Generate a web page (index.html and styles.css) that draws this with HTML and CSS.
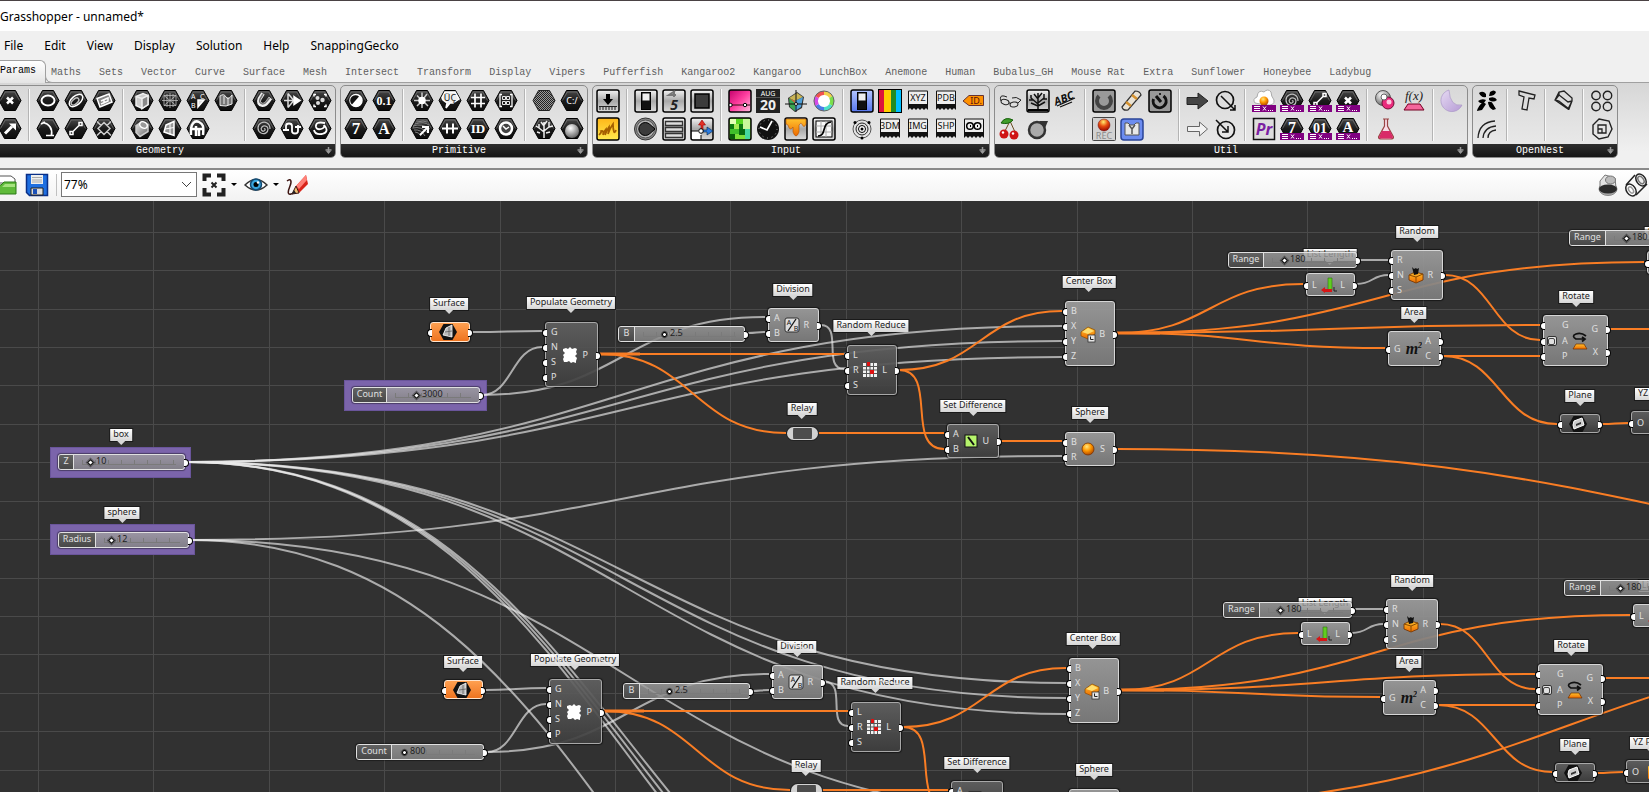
FILE: index.html
```html
<!DOCTYPE html>
<html lang="en">
<head>
<meta charset="utf-8">
<title>Grasshopper - unnamed*</title>
<link rel="stylesheet" href="styles.css">
</head>
<body>
<svg class="defs" aria-hidden="true">
  <defs>
    <linearGradient id="g-hex" x1="0" y1="0" x2="0" y2="1"><stop offset="0" stop-color="#4a4a4a"/><stop offset=".5" stop-color="#1c1c1c"/><stop offset="1" stop-color="#0c0c0c"/></linearGradient>
    <linearGradient id="g-box" x1="0" y1="0" x2="0" y2="1"><stop offset="0" stop-color="#f4f4f4"/><stop offset=".5" stop-color="#a8a8a8"/><stop offset="1" stop-color="#dcdcdc"/></linearGradient>
    <linearGradient id="g-grey" x1="0" y1="0" x2="1" y2="1"><stop offset="0" stop-color="#eee"/><stop offset="1" stop-color="#666"/></linearGradient>
    <linearGradient id="g-blue" x1="0" y1="0" x2="0" y2="1"><stop offset="0" stop-color="#b4c6ff"/><stop offset="1" stop-color="#5676ee"/></linearGradient>
    <linearGradient id="g-yellow" x1="0" y1="0" x2="0" y2="1"><stop offset="0" stop-color="#ffb619"/><stop offset="1" stop-color="#ffe94e"/></linearGradient>
    <linearGradient id="g-pink" x1="0" y1="0" x2="1" y2="1"><stop offset="0" stop-color="#c3006b"/><stop offset=".5" stop-color="#ff3fa0"/><stop offset="1" stop-color="#ffc0de"/></linearGradient>
    <linearGradient id="g-orange" x1="0" y1="0" x2="0" y2="1"><stop offset="0" stop-color="#ffc22e"/><stop offset="1" stop-color="#ee6a00"/></linearGradient>
    <linearGradient id="g-moon" x1="0" y1="0" x2="1" y2="1"><stop offset="0" stop-color="#e6daf3"/><stop offset="1" stop-color="#b59bd4"/></linearGradient>
    <radialGradient id="g-ball" cx=".4" cy=".3" r=".7"><stop offset="0" stop-color="#fff"/><stop offset="1" stop-color="#666"/></radialGradient>
    <radialGradient id="g-sun" cx=".4" cy=".3" r=".7"><stop offset="0" stop-color="#ffe680"/><stop offset=".5" stop-color="#f90"/><stop offset="1" stop-color="#b34a00"/></radialGradient>
    <radialGradient id="g-rec" cx=".45" cy=".25" r=".8"><stop offset="0" stop-color="#ffee70"/><stop offset=".45" stop-color="#e84d10"/><stop offset="1" stop-color="#8a0000"/></radialGradient>
    <pattern id="p-check" width="2" height="2" patternUnits="userSpaceOnUse"><rect width="2" height="2" fill="#222"/><path d="M0 0h1v1H0zM1 1h1v1H1z" fill="#999"/></pattern>
  </defs>
</svg>

<header class="titlebar"><h1 class="title">Grasshopper - unnamed*</h1></header>

<nav class="menu" aria-label="Main menu">
  <button>File</button><button>Edit</button><button>View</button><button>Display</button><button>Solution</button><button>Help</button><button>SnappingGecko</button>
</nav>

<div class="tabs" role="tablist">
  <button role="tab" class="tab tab-active" aria-selected="true">Params</button>
  <button role="tab" class="tab">Maths</button>
  <button role="tab" class="tab">Sets</button>
  <button role="tab" class="tab">Vector</button>
  <button role="tab" class="tab">Curve</button>
  <button role="tab" class="tab">Surface</button>
  <button role="tab" class="tab">Mesh</button>
  <button role="tab" class="tab">Intersect</button>
  <button role="tab" class="tab">Transform</button>
  <button role="tab" class="tab">Display</button>
  <button role="tab" class="tab">Vipers</button>
  <button role="tab" class="tab">Pufferfish</button>
  <button role="tab" class="tab">Kangaroo2</button>
  <button role="tab" class="tab">Kangaroo</button>
  <button role="tab" class="tab">LunchBox</button>
  <button role="tab" class="tab">Anemone</button>
  <button role="tab" class="tab">Human</button>
  <button role="tab" class="tab">Bubalus_GH</button>
  <button role="tab" class="tab">Mouse Rat</button>
  <button role="tab" class="tab">Extra</button>
  <button role="tab" class="tab">Sunflower</button>
  <button role="tab" class="tab">Honeybee</button>
  <button role="tab" class="tab">Ladybug</button>
</div>

<section class="ribbon" id="ribbon"></section>

<div class="toolbar">
  <button class="tb" aria-label="Open"><svg viewBox="0 0 24 24"><path d="M1 3h17l4 3v4H1z" fill="#fff" stroke="#555"/><path d="M0 21V12h8l3-3h12v12z" fill="#5fba3a" stroke="#2c7a18"/><path d="M0 14h9l3-3h10v3z" fill="#a6e27f"/></svg></button>
  <button class="tb" aria-label="Save"><svg viewBox="0 0 24 24"><path d="M1.500 1.500h21v21h-18l-3-3z" fill="#1f6fe0" stroke="#0a2f86" stroke-width="1.500"/><path d="M6 2h12v9H6z" fill="#eee"/><path d="M7 4.500h10M7 7h10M7 9h10" stroke="#aaa"/><path d="M6 15h12v7H6z" fill="#ddd" stroke="#222"/><path d="M8 16h4v5H8z" fill="#1c51b8"/></svg></button>
  <span class="tb-sep"></span>
  <select class="zoom" aria-label="Zoom"><option>77%</option></select>
  <button class="tb" aria-label="Zoom extents"><svg viewBox="0 0 24 24"><path d="M2.500 8V2.500H9M15 2.500h6.500V8M21.500 15v6.500H15M9 21.500H2.500V15" fill="none" stroke="#222" stroke-width="4"/><path d="M9.500 9.500l5 5M14.500 9.500l-5 5" stroke="#222" stroke-width="2"/></svg></button>
  <span class="caret"></span>
  <button class="tb" aria-label="Preview"><svg viewBox="0 0 24 24"><path d="M1 12Q12 1 23 12Q12 22 1 12z" fill="#fff" stroke="#333" stroke-width="1.500"/><circle cx="12" cy="11.500" r="5.500" fill="#38a5dc" stroke="#124a73" stroke-width="1.500"/><circle cx="12" cy="11.500" r="2.500"/><circle cx="14" cy="9.500" r="1.200" fill="#fff"/></svg></button>
  <span class="caret"></span>
  <button class="tb" aria-label="Sketch"><svg viewBox="0 0 24 24"><path d="M1 8c4-3 5 0 3 5s-3 9 1 8 5-2 5-2" fill="none" stroke="#3d1512" stroke-width="1.500"/><path d="M10 13L20 2l2 9-9 9z" fill="#d8241a"/><path d="M10 13L20 2l1 5-8 9z" fill="#ff8178"/><path d="M6 21l4-8 3 7z" fill="#f0bd72" stroke="#3d1512"/><path d="M6 21l2-4 2 3z" fill="#222"/></svg></button>
  <span class="spacer"></span>
  <button class="tb" aria-label="Shaded preview"><svg viewBox="0 0 24 24"><ellipse cx="12" cy="16" rx="9" ry="6.500" fill="#aaa" stroke="#888"/><path d="M4 15V8l5-6 10 3 1 10z" fill="#e2e2e2" stroke="#777"/><ellipse cx="14.500" cy="7" rx="5" ry="4" fill="#bbb" stroke="#777"/><ellipse cx="12" cy="16" rx="9" ry="4.500" fill="#2b2b2b"/></svg></button>
  <button class="tb" aria-label="Wire preview"><svg viewBox="0 0 24 24" fill="none" stroke="#222" stroke-width="1.500"><path d="M2 12L11 2M12 22l11-11"/><ellipse cx="7" cy="17" rx="4.500" ry="6.500" transform="rotate(-35 7 17)" fill="#fff"/><ellipse cx="7" cy="17" rx="2" ry="3.500" transform="rotate(-35 7 17)" stroke="#999"/><ellipse cx="17" cy="7" rx="4.500" ry="6.500" transform="rotate(-35 17 7)" fill="#eee"/><ellipse cx="17" cy="7" rx="2.500" ry="4" transform="rotate(-35 17 7)" stroke="#777"/></svg></button>
</div>

<main class="canvas" id="canvas"></main>
<script src="app.js"></script>
</body>
</html>
```
FILE: styles.css
```css
* { box-sizing: border-box; }
body {
  margin: 0;
  height: 100vh;
  display: flex;
  flex-direction: column;
  overflow: hidden;
  background: #f0f0f0;
  color: #000;
  font-family: "Noto Sans", "Open Sans", sans-serif;
  font-size: 12px;
}
button { border: 0; padding: 0; margin: 0; background: none; font: inherit; color: inherit; }
.defs { position: absolute; width: 0; height: 0; }

.titlebar { height: 31px; flex: none; background: #fff; border-top: 1px solid #4a4244; display: flex; align-items: center; }
.title { margin: 0; font-size: 12px; font-weight: 400; }

.menu { height: 29px; flex: none; display: flex; align-items: center; gap: 21px; padding-left: 4px; font-size: 12px; }

.tabs {
  height: 23px; flex: none; display: flex; gap: 18px;
  border-bottom: 1px solid #a0a0a0;
  font-family: "Liberation Mono", monospace; font-size: 10px; color: #606060;
}
.tab { height: 22px; padding-top: 2px; white-space: nowrap; }
.tab-active {
  position: relative; height: 23px; width: 46px; margin-right: -13px;
  text-align: left; color: #000; padding: 0 0 3px;
  border: 1px solid #a0a0a0; border-width: 1px 1px 0 0; border-top-right-radius: 6px;
  background: linear-gradient(#fff, #e4e4e4);
}
.tab-active::after {
  content: ""; position: absolute; left: 100%; bottom: 0; width: 7px; height: 7px;
  border: 1px solid #a0a0a0; border-width: 0 0 1px 1px; border-bottom-left-radius: 7px; background: #f0f0f0;
}

.ribbon { height: 85px; flex: none; display: flex; align-items: flex-start; gap: 4px; padding-top: 2px; background: linear-gradient(#d6d6d6, #f0f0f0 80%); }
.panel { flex: none; border: 1px solid #8c8c8c; border-radius: 5px; overflow: hidden; background: linear-gradient(#d8d8d8, #ececec); }
.panel:first-child { margin-left: -6px; }
.panel-body { display: flex; gap: 6px; padding: 3px 3px 3px; }
.tools { display: grid; grid-template-rows: 24px 24px; grid-auto-columns: 24px; grid-auto-flow: column; gap: 4px; }
.rule { width: 2px; background: linear-gradient(90deg, #b4b4b4 50%, #fafafa 50%); }
.tool { width: 24px; height: 24px; }
.tool svg { display: block; width: 24px; height: 24px; }
.tool text { font-family: "Noto Sans", sans-serif; }
.tool .serif { font-family: "Liberation Serif", serif; }
.panel-foot {
  height: 13px; display: flex; align-items: center; justify-content: center; padding-right: 10px;
  background: linear-gradient(#2e2e2e, #161616); color: #fff;
  font-family: "Liberation Mono", monospace; font-size: 10px; line-height: 12px; position: relative;
}
.panel-foot button { position: absolute; right: 2px; top: 2px; width: 9px; height: 9px; }
.panel-foot svg { display: block; width: 9px; height: 9px; }

.toolbar {
  height: 33px; flex: none; display: flex; align-items: center; padding: 0 1px 2px 0;
  border-top: 2px solid #8a8a8a; background: linear-gradient(#fff, #f2f2f2);
}
.tb { width: 24px; height: 24px; flex: none; }
.tb:first-child { margin-left: -7px; }
.tb + .tb { margin-left: 8px; }
.spacer + .tb + .tb { margin-left: 4px; }
.tb svg { display: block; width: 24px; height: 24px; }
.tb-sep { width: 1px; height: 22px; margin: 0 4px 0 7px; background: #c0c0c0; }
.zoom {
  width: 136px; height: 25px; margin-right: 5px; padding: 0 2px; appearance: none;
  border: 1px solid #777; border-radius: 0; color: #000; font: inherit; font-size: 12px; line-height: 20px;
  background-color: #fff;
  background-image: linear-gradient(45deg, transparent 44%, #444 44% 58%, transparent 58%), linear-gradient(-45deg, transparent 44%, #444 44% 58%, transparent 58%);
  background-size: 5px 5px; background-repeat: no-repeat; background-position: right 9px center, right 5px center;
}
.caret { margin: 0 7px 0 5px; border: 3px solid transparent; border-top-color: #000; border-bottom: 0; }
.spacer { flex: 1; }

.canvas { position: relative; flex: 1; min-height: 0; overflow: hidden; background: #313131; font-size: 9px; line-height: 12px; }
.layer { position: absolute; inset: 0; width: 100%; height: 100%; }
.grid-line { stroke: #4a4a4a; shape-rendering: crispEdges; }
.wire { fill: none; stroke: rgba(235, 235, 235, .66); stroke-width: 2; }
.wire-hot { stroke: #f97d24; }
.wire-thick { stroke-width: 3; }

.cluster { position: absolute; background: #7b64ab; border: 1px solid #6a559b; }
.tag {
  position: absolute; transform: translateX(-50%); height: 12px; padding: 0 3px; white-space: nowrap; line-height: 10px;
  background: linear-gradient(#fff, #d6d6d6); color: #222; box-shadow: 0 0 0 1px #1a1a1a;
}
.tag::after { content: ""; position: absolute; left: 50%; top: 100%; margin-left: -4px; border: 4px solid transparent; border-top-color: #d8d8d8; border-bottom: 0; }

.node {
  position: absolute; display: flex; align-items: stretch; justify-content: space-between;
  border: 1px solid #d6d6d6; border-radius: 3px; color: #e0e0e0;
  background: linear-gradient(rgba(156, 156, 156, .93), rgba(124, 124, 124, .93)); box-shadow: 0 0 1px 1px rgba(0, 0, 0, .5);
}
.node-dark { border-color: #a8a8a8; background: linear-gradient(rgba(96, 96, 96, .92), rgba(62, 62, 62, .92)); }
.node-hot { border-color: #ffe4cc; background: linear-gradient(#ffa050, #ee7420); }
.ports { list-style: none; margin: 0; padding: 1px 0; display: flex; flex-direction: column; min-width: 4px; line-height: 10px; }
.ports li { flex: 1; display: flex; align-items: center; position: relative; }
.ports-in li { padding-left: 5px; }
.ports-out li { padding-right: 9px; justify-content: flex-end; }
.ports li::before { content: ""; position: absolute; top: 50%; margin-top: -3px; width: 4px; height: 6px; background: #fff; border: 1px solid #000; }
.ports-in li::before { left: -4px; border-right: 0; border-radius: 4px 0 0 4px; }
.ports-out li::before { right: -4px; border-left: 0; border-radius: 0 4px 4px 0; }
.node-wide .ports-in li { padding-left: 18px; }
.expr { position: absolute; left: 3px; top: 20px; width: 10px; height: 10px; background: #e0e0e0; border: 1px solid #333; border-radius: 2px; }
.expr::after { content: ""; position: absolute; right: 1px; top: 1px; width: 5px; height: 5px; border: 1px solid #444; border-radius: 2px; }
.glyph { width: 18px; height: 18px; flex: none; align-self: center; display: block; }
.glyph text { font-family: "Liberation Serif", serif; }
.glyph .sans { font-family: "Noto Sans", sans-serif; }

.relay { position: absolute; border: 5px solid #d2d2d2; border-width: 1px 6px; border-radius: 7px; background: #4c4c4c; box-shadow: 0 0 0 1px #222; }

.slider { position: absolute; display: flex; border: 1px solid #e0e0e0; border-radius: 3px; background: linear-gradient(rgba(160, 160, 160, .8), rgba(132, 132, 132, .86)); box-shadow: 0 0 1px 1px rgba(0, 0, 0, .4); }
.slider::after { content: ""; position: absolute; right: -5px; top: 4px; width: 4px; height: 6px; background: #fff; border: 1px solid #000; border-left: 0; border-radius: 0 4px 4px 0; }
.slider label { display: flex; align-items: flex-start; justify-content: center; border-right: 1px solid #e0e0e0; color: #e0e0e0; background: linear-gradient(#626262, #484848); border-radius: 2px 0 0 2px; }
.track { flex: 1; min-width: 0; display: grid; align-items: center; padding: 0 5px; }
.track > * { grid-area: 1 / 1; }
.track input {
  appearance: none; width: 100%; height: 5px; margin: 0;
  background: repeating-linear-gradient(90deg, #7a7a7a 0 1px, transparent 1px 13px) 3px 0 / calc(100% - 6px) 4px no-repeat, linear-gradient(#7a7a7a, #7a7a7a) 3px 4px / calc(100% - 6px) 1px no-repeat;
}
.track input::-webkit-slider-thumb { appearance: none; width: 5px; height: 5px; background: #fff; border: 1px solid #000; transform: rotate(45deg); box-shadow: 0 0 0 1px rgba(0, 0, 0, .4); }
.track .round::-webkit-slider-thumb { border-radius: 50%; }
.track output { align-self: start; color: #222; pointer-events: none; }
```
FILE: app.js
```js
// ---- Ribbon icons -------------------------------------------------------
const HEX = 'M1 11.500L6.500 1.500h11L23 11.500 17.500 21.500h-11z';
const hex = s => `<path d="${HEX}" fill="url(#g-hex)" stroke="#000"/><path d="M2.500 11.500L7.300 3h9.400l4.800 8.500" fill="none" stroke="#777" stroke-width=".7"/><g fill="none" stroke="#fff" stroke-width="1.500">${s}</g>`;
const box = (s, fill = 'url(#g-box)') => `<rect x="1" y="1" width="22" height="22" rx="2" fill="${fill}" stroke="#000" stroke-width="1.500"/>${s}`;
const chip = t => `<path d="M2 2.500q0-1 1-1h18q1 0 1 1V21l-2-2-2 2-2-2-2 2-2-2-2 2-2-2-2 2-2-2-2 2z" fill="#111"/><path d="M3 2.500h18V15H3z" fill="#eee"/><text x="12" y="12" font-size="9" text-anchor="middle" fill="#111">${t}</text>`;
const txt = (t, size = 14, y = 16) => `<text class="serif" x="12" y="${y}" font-size="${size}" font-weight="bold" text-anchor="middle" fill="#fff" stroke="none">${t}</text>`;
const bar = s => hex(s) + '<rect y="16" width="24" height="7" fill="#800080"/><path d="M2 17.500h6M2 19.500h6M2 21.500h6M11 17.500l3 4M14 17.500l-3 4M16 21.500h1M18 21.500h1M20 21.500h1" stroke="#fff" fill="none"/>';
const spiral = '<path d="M12 12c1-1 2 1 0 2s-4-2-2-4 6-1 6 2-3 6-7 4-4-8 0-10 9 0 9 6" stroke="#bbb" stroke-width="1.300"/>';
const line = '<path d="M8 15.500l8-8M6 14.500h3v3H6zM15 5.500h3v3h-3z"/>';
const cross = '<path d="M9 8.500l6 6M15 8.500l-6 6" stroke-width="2.500"/>';
const knob = '<circle cx="11.500" cy="12" r="11" fill="#888" stroke="#333"/><circle cx="11.500" cy="12" r="9" fill="#b4b4b4" stroke="#555"/><path d="M16 7.500a6.500 6.500 0 1 0 0 9l5-4.500z" fill="#3c3c3c" stroke="#000"/>';

const icons = {
  Point: hex(cross),
  Vector: hex('<path d="M7 16.500l7-7" stroke-width="3"/><path d="M11 6.500h7v7z" fill="#fff" stroke="none"/>'),
  Circle: hex('<ellipse cx="12" cy="11.500" rx="6.500" ry="5" stroke-width="2"/>'),
  'Circular Arc': hex('<path d="M7 5.500Q17 8 15.500 18M10 18.500h8M5 7l4-2" stroke-width="1.700"/>'),
  Curve: hex('<ellipse cx="12" cy="11.500" rx="8" ry="4.500" transform="rotate(-40 12 11.500)"/><ellipse cx="11" cy="12.500" rx="4.500" ry="2.500" transform="rotate(-40 11 12.500)" stroke="#bbb"/>'),
  Line: hex(line),
  Plane: hex('<path d="M5 9.500L17 5l3 8-12 5z" fill="#888"/><path d="M9 12l7-3v3l-7 3M12 10.500v4"/>'),
  Rectangle: hex('<path d="M12 5.500l6 6-6 6-6-6zM5 4.500l4 4M19 4.500l-4 4M5 18.500l4-4M19 18.500l-4-4" stroke="#ccc"/>'),
  Box: hex('<path d="M6 7.500l7-3 5 2v9l-6 4-6-3z" fill="#ccc" stroke="#eee"/><path d="M12 9.500v10l6-4v-9z" fill="#888" stroke="#eee"/><path d="M6 7.500l6 2" stroke="#eee"/>'),
  Brep: hex('<path d="M6 8.500l6-4 6 3v7l-8 5-4-4z" fill="url(#g-grey)" stroke="#ccc"/><ellipse cx="13.500" cy="8" rx="4" ry="3" transform="rotate(30 13.500 8)" fill="#999" stroke="#fff"/>'),
  Mesh: hex('<path d="M6 6.500h12v10H6zM12 4v15M4 11.500h16M6 6.500l12 10M18 6.500l-12 10M9 5v13M15 5v13" stroke="#bbb" stroke-width=".8"/>'),
  Surface: hex('<path d="M8 8l8-3.500v14L6 15z" fill="#999"/><path d="M12 6v11.500M7 12l9-1.500" stroke-width="1"/>'),
  'Mesh Face': hex('<text x="5" y="9.500" font-size="7" fill="#fff" stroke="none">A</text><text x="14" y="9.500" font-size="7" fill="#fff" stroke="none">C</text><text x="5" y="19" font-size="7" fill="#fff" stroke="none">B</text><path d="M12 11h6l-6 7z" fill="#ddd"/>'),
  'Twisted Box': hex('<path d="M5 18c-1-12 4-15 8-13s5 4 4 13M4 12h14M10 9v10M13 11v8" stroke-width="2.500"/>'),
  SubD: hex('<path d="M6 16.500V7q4-3 6 1t6-2v9l-6 2zM10 7v8M14 8v8" fill="#777" stroke="#eee" stroke-width="1"/>'),
  Field: hex('<path d="M11 4.500L7.500 10q-2 5 3 6 3 0 5-3l3-4" stroke="#eee" stroke-width="4"/><path d="M11 5L8 10q-1.500 4 2.500 5 2.500 0 4.500-3l2.500-3" stroke="#777" stroke-width="1.500"/>'),
  Spiral: hex(spiral),
  'Geometry Cache': hex('<path d="M4 11.500h11M8 4.500v14M8 4.500l5 6v2l-5 6" stroke="#ddd"/><path d="M14 7.500l6 4-6 4z" fill="#fff"/>'),
  Transform: hex('<path d="M6 14V9q0-2.500 3-2.500T12 9v5q0 2.500 3 2.500t3-2.500V8M3 13h6M15 10h6" stroke-width="1.800"/>'),
  'Geometry Pipeline': hex('<path d="M8 5.500H6v2M16 5.500h2v2M8 17.500H6v-2M16 17.500h2v-2"/><g fill="#ddd" stroke="none"><circle cx="9.500" cy="9" r="2"/><circle cx="14.500" cy="11" r="2.200"/><circle cx="10" cy="14" r="2"/></g>'),
  Group: hex('<path d="M17 6q-10-2-9 4 1 3 5 2t3-4q6 7-2 9-7 1-8-4" stroke-width="1.800"/>'),
  Boolean: hex('<circle cx="12" cy="11.500" r="6" fill="#fff"/><path d="M8 15.500a5 5 0 0 1 7-8z" fill="#111" stroke="none"/>'),
  Integer: hex(txt('7', 17, 17)),
  Number: hex(txt('0.1', 12, 16)),
  Text: hex(txt('A', 16, 17)),
  Colour: hex('<path d="M12 3.500v5M12 14v5M4 11.500h5M15 11.500h5M7 6.500l3 3M14 13l4 4M7 17l4-4M14 9l3-4" stroke="#ccc"/><circle cx="12" cy="11.500" r="3" fill="#fff"/>'),
  Domain: hex('<path d="M3 9q9-3 17 3M3 11q8-2 15 5M4 13q7-1 11 6M5 7q9-3 14 1M5 15q4 0 6 4M7 5q7-2 10 0" stroke="#999" stroke-width=".8"/><path d="M10 18l7-7M12 10h6v6" stroke-width="2"/>'),
  Culture: hex('<path d="M4 8.500L7 3h10l4 7-6 4h-3l-4 5 1-5-4-3z" fill="#eee"/><text x="12" y="12" font-size="9" text-anchor="middle" fill="#111" stroke="none">ÜÇ</text>'),
  'Domain 1D': hex('<path d="M4 11.500h16M9 6.500v10M15 6.500v10" stroke-width="2"/>'),
  Matrix: hex('<path d="M9 4.500v14M15 4.500v14M5 8.500h14M5 14.500h14" stroke-width="1.700"/>'),
  Guid: hex(txt('ID', 13, 16)),
  'Matrix Value': hex('<path d="M8 5.500H6v12h2M16 5.500h2v12h-2" stroke-width="1.300"/><path d="M8.500 7.500h3v3h-3zM12.500 7.500h3v3h-3zM8.500 12.500h3v3h-3zM12.500 12.500h3v3h-3z" stroke-width=".9"/>'),
  Time: hex('<circle cx="12" cy="11.500" r="6" stroke-width="2.500" fill="#444"/><path d="M9 9l3 3 3-2"/>'),
  Shader: `<path d="${HEX}" fill="url(#p-check)" stroke="#222"/>`,
  'Data Path': hex('<path d="M12 21v-7M12 15L7 11V7M7 11l-3-2M12 14l5-4V5M17 10l4-1M12 14V5M12 9L9 5M12 8l3-4M8 16l-3-1M14 16l4-1" stroke="#eee"/>'),
  'File Path': hex('<text x="12" y="15" font-size="9" text-anchor="middle" fill="#fff" stroke="none">C:/</text>'),
  'Data Sphere': hex('<circle cx="12" cy="14" r="7" fill="url(#g-ball)" stroke="none"/>'),

  Button: box('<path d="M12 5v7" stroke="#000" stroke-width="4"/><path d="M7 10h10l-5 6z"/><path d="M3 17.500h18M4 18v3M7 18v3M10 18v3M13 18v3M16 18v3M19 18v3" stroke="#222"/>'),
  Scribble: box('<path d="M3 18q3-3 2-4 3-1 2 4 1-4 3-6 0 3-1 6 2-5 4-8 0 4-1 7 2-6 5-10 0 5 1 8 1 1 2-2" fill="none" stroke="#a55f00" stroke-width="1.700"/>', 'url(#g-yellow)'),
  Slider: box('<rect x="7.500" y="3.500" width="9" height="17" fill="#111" stroke="#000"/><rect x="8.500" y="4.500" width="7" height="7" fill="#eee"/>'),
  'Control Knob': knob,
  'Digit Scroller': box('<path d="M13 2l-6 4h7M12 2v6" fill="none" stroke="#777" stroke-width="2"/><text x="12" y="21" font-size="14" font-weight="bold" font-style="italic" text-anchor="middle" fill="#222">5</text>'),
  'Value List': box('<g fill="#ddd" stroke="#333" stroke-width="1.300"><path d="M3.500 4.500h17v4h-17zM3.500 10.500h17v4h-17zM3.500 16.500h17v4h-17z"/></g>'),
  Panel: box('<rect x="5" y="5" width="14" height="14" fill="#3c3c3c" stroke="#000" stroke-width="1.500"/>'),
  'MD Slider': box('<path d="M2 14h9v8H2z" fill="#fff"/><path d="M11 14V8H8.500L12 3l3.500 5H13v6z" fill="#e33024" stroke="#900" stroke-width=".6"/><path d="M12 13h5v-3l6 4-6 4v-3h-5z" fill="#2b7be0" stroke="#024" stroke-width=".6"/><path d="M11 18v5M1 14h7" stroke="#000"/><circle cx="11" cy="14" r="2.300" fill="#fff" stroke="#000"/>'),
  Gradient: box('<path d="M2 16h20" stroke="#311"/><circle cx="2.500" cy="16" r="1.700" fill="#fff" stroke="#000"/><circle cx="17" cy="16" r="1.700" fill="#fff" stroke="#000"/>', 'url(#g-pink)'),
  'Image Sampler': box('<path d="M2 2h6v5H2z" fill="#e4ffb5"/><path d="M8 2h7v5H8z" fill="#58d820"/><path d="M15 2h7v10h-7z" fill="#c9f79b"/><path d="M2 7h4v5H2zM11 7h4v5h-4z" fill="#0c7a10"/><path d="M6 7h5v5H6z" fill="#a5eb53"/><path d="M2 12h9v5H2z" fill="#3fbf2a"/><path d="M11 12h6v6h-6z" fill="#066b12"/><path d="M17 12h5v10h-5z" fill="#45d9a0"/><path d="M2 17h5v5H2z" fill="#095e09"/>', '#7be038'),
  Calendar: '<path d="M0 0h24v24H0z" fill="#222"/><text x="12" y="7" font-size="7" text-anchor="middle" fill="#fff">AUG</text><text x="12" y="21" font-size="14" font-weight="bold" text-anchor="middle" fill="#eee">20</text><path d="M0 8.500h24" stroke="#777" stroke-width=".6"/>',
  Clock: '<circle cx="12" cy="12" r="11" fill="#111"/><circle cx="12" cy="12" r="9" fill="none" stroke="#aaa" stroke-dasharray="1 3.700"/><path d="M4 10l7 3 5-9" fill="none" stroke="#fff" stroke-width="1.700"/>',
  'Colour Picker': '<path d="M4 9l9-6 7 5-2 11-7 4-6-5z" fill="#333"/><path d="M5 9l8-5 6 4-8 4z" fill="#c9b455"/><path d="M11 12l8-4-2 10-6 4z" fill="#4f9fd8"/><path d="M5 9l6 3v10l-5-4z" fill="#3ca653"/><path d="M5 9l6 3v2z" fill="#d9603c"/><path d="M12 1v22M1 15h22" stroke="#111"/><circle cx="12" cy="15" r="1.500" fill="#fff" stroke="#111"/>',
  'Object Details': box('<path d="M2 2h20v5q-2 5-4 0-1-2-3 1v7q-3 8-6 0v-5Q6 15 4 8L2 7z" fill="url(#g-orange)" stroke="#b35000" stroke-width=".6"/>'),
  'Colour Wheel': '<circle cx="12" cy="12" r="9" fill="#fff"/><g fill="none" stroke-width="4"><path d="M12 4a8 8 0 0 1 7 4" stroke="#f2d14a"/><path d="M19 8a8 8 0 0 1 0 8" stroke="#7be04b"/><path d="M19 16a8 8 0 0 1-7 4" stroke="#4ce0c7"/><path d="M12 20a8 8 0 0 1-7-4" stroke="#4b7be8"/><path d="M5 16a8 8 0 0 1 0-8" stroke="#d34be8"/><path d="M5 8a8 8 0 0 1 7-4" stroke="#f0524f"/></g><circle cx="12" cy="12" r="10" fill="none" stroke="#666"/>',
  'Graph Mapper': box('<rect x="4" y="4" width="16" height="16" fill="#f8f8f8" stroke="#000"/><path d="M9 4v16M14 4v16M4 9h16M4 15h16" stroke="#aaa"/><path d="M6 19c9 0 3-13 13-14" fill="none" stroke="#000" stroke-width="1.700"/>'),
  'Blue Slider': box('<rect x="7.500" y="3.500" width="9" height="17" fill="#111" stroke="#000"/><rect x="8.500" y="4.500" width="7" height="7" fill="#eee"/>', 'url(#g-blue)'),
  Atom: '<g fill="none" stroke="#555"><circle cx="12" cy="12" r="9"/><circle cx="12" cy="12" r="6" stroke="#222"/></g><circle cx="12" cy="12" r="3.500" fill="#fff" stroke="#000"/><circle cx="12" cy="12" r="1.500"/><circle cx="5" cy="5.500" r="1.500"/><circle cx="19" cy="5.500" r="1.500"/><circle cx="12" cy="21" r="1.500"/>',
  Swatches: '<path d="M0 0h24v24H0z"/><path d="M1 1h5v22H1z" fill="#dc143c"/><path d="M6 1h7v22H6z" fill="#ffcc00"/><path d="M13 1h5v22h-5z" fill="#228b22"/><path d="M18 1h5v22h-5z" fill="#00bfff"/>',
  'Import 3DM': chip('3DM'), 'Import XYZ': chip('XYZ'), 'Import Image': chip('IMG'), 'Import PDB': chip('PDB'), 'Import SHP': chip('SHP'),
  Atoms: chip('') + '<circle cx="8" cy="9" r="3.300" fill="none" stroke="#000" stroke-width="1.500"/><circle cx="15.500" cy="9" r="3.300" fill="none" stroke="#000" stroke-width="1.500"/><path d="M8 9h1M15 9h1" stroke="#000" stroke-width="2"/>',
  'Object ID': '<path d="M1 12l6-5.500h14.500v10H7z" fill="#ff9100" stroke="#633"/><text x="14" y="15" font-size="9" text-anchor="middle" fill="#511">ID.</text>',

  Glasses: '<g fill="none" stroke="#222"><ellipse cx="7" cy="13" rx="4" ry="2.500" transform="rotate(15 7 13)"/><ellipse cx="16" cy="15.500" rx="4" ry="2.500" transform="rotate(-10 16 15.500)"/><path d="M3 12Q1 6 6 7l3 1M11 14h1.500M20 14l3-3q-5-4-9-2"/></g>',
  Cherries: '<path d="M12 4L7 14M12 4l5 11" stroke="#6a4b20" fill="none"/><path d="M3 6q4-7 12-3-4 5-12 3z" fill="#3f9d2a" stroke="#17600c"/><circle cx="6" cy="17" r="4.500" fill="#cf1414"/><circle cx="16" cy="18" r="4.500" fill="#cf1414"/><circle cx="5" cy="15.500" r="1.200" fill="#fff"/><circle cx="15" cy="16.500" r="1.200" fill="#fff"/>',
  Tree: box('<path d="M12 21v-9M12 15L5 9V6M12 14l6-5V5M12 12V4M12 10L8 5M12 9l4-5M7 11H3M17 10h4M12 17l-7-3M12 17l7-4" stroke="#111" stroke-width="1.500" fill="none"/><path d="M2 20h20v2H2z"/>'),
  Galapagos: '<circle cx="11" cy="13" r="8" fill="#aaa" stroke="#333" stroke-width="2.500"/><path d="M13 4h9l-3 7z" fill="#333"/>',
  Spelling: '<text x="11" y="13" font-size="11" font-style="italic" font-weight="bold" text-anchor="middle" fill="#111" transform="rotate(-22 11 12)">ABC</text><path d="M3 17L21 9M6 18l12-5" stroke="#111" stroke-width="1.300"/>',
  Loop: box('<path d="M7 7a7 7 0 1 0 10 0" fill="none" stroke="#444" stroke-width="4"/>', '#999'),
  Record: '<rect x=".500" y=".500" width="23" height="23" rx="1" fill="#d2d2d2" stroke="#444"/><text x="12" y="22" font-size="9" text-anchor="middle" fill="#8a8a8a">REC</text><circle cx="12" cy="8" r="6" fill="url(#g-rec)" stroke="#711" stroke-width=".5"/>',
  Eraser: '<path d="M2 18L15 2q5 0 6 4L8 21q-5 1-6-3z" fill="#e9e2d4" stroke="#333" stroke-width="1.200"/><path d="M6 13l5 4M12 6l5 4" stroke="#d5912e" stroke-width="2.500"/>',
  Jump: '<rect x="1" y="2" width="22" height="21" rx="3" fill="#6c8cf0" stroke="#2a4497" stroke-width="1.500"/><path d="M5 6h3l2 2h4l2-2h3v12H5z" fill="#e8e8e8" stroke="#555"/><path d="M9 8l3 4 3-4M12 12v5" fill="none" stroke="#555" stroke-width="1.500"/>',
  Timer: box('<path d="M5.500 10a6.500 6.500 0 1 0 10-3" fill="none" stroke="#111" stroke-width="3"/><path d="M8 7l5 6" stroke="#111" stroke-width="3"/><circle cx="12" cy="5" r="1"/>', '#999'),
  'Arrow Full': '<path d="M1 8.500h11V4l10 8-10 8v-4.500H1z" fill="#444" stroke="#222"/>',
  'Arrow Empty': '<path d="M1.500 9.500h12V5l8 7-8 7v-4.500h-12z" fill="#f2f2f2" stroke="#666"/>',
  'Find Out': '<circle cx="11" cy="11" r="8.500" fill="none" stroke="#111" stroke-width="1.700"/><path d="M7 7l14 14M21 16v5h-5" fill="none" stroke="#111" stroke-width="1.500"/>',
  'Find In': '<circle cx="12" cy="13" r="8.500" fill="none" stroke="#111" stroke-width="1.700"/><path d="M2 3l12 12M14 9v6H8" fill="none" stroke="#111" stroke-width="1.500"/>',
  Egg: '<path d="M3 14q-3-4 2-6 1-8 7-5 4-4 7 0 0 4 3 8 1 6-8 5z" fill="#fff" stroke="#aaa"/><circle cx="12" cy="12" r="4.500" fill="url(#g-sun)"/><rect y="16" width="24" height="7" fill="#800080"/><path d="M2 17.500h6M2 19.500h6M2 21.500h6M11 17.500l3 4M14 17.500l-3 4M16 21.500h1M18 21.500h1M20 21.500h1" stroke="#fff"/>',
  Preset: '<rect x="1.500" y="1.500" width="21" height="21" fill="#ddd" stroke="#111" stroke-width="1.500"/><text x="12" y="18" font-size="16" font-weight="bold" font-style="italic" text-anchor="middle" fill="#7b1fa2">Pr</text>',
  'Spiral Data': bar(spiral), 'Integer Data': bar(txt('7', 16, 16)), 'Line Data': bar('<g transform="translate(0 -1)">' + line + '</g>'), 'Number Data': bar(txt('01', 14, 16)), 'Point Data': bar(cross), 'Text Data': bar(txt('A', 15, 15)),
  Spheres: '<circle cx="9" cy="9" r="7.500" fill="url(#g-ball)" stroke="#555"/><circle cx="14" cy="14" r="6" fill="#ea2a7c" stroke="#701036"/><circle cx="10" cy="8" r="3" fill="#fff" stroke="#666"/><circle cx="15" cy="13" r="2.500" fill="#ffc4dd"/>',
  Flask: '<path d="M9 2h6M10.500 2v7L4.500 20q0 2 3 2h9q3 0 3-2L13.500 9V2" fill="#f7dbe6" stroke="#944" stroke-width="1.200"/><path d="M8 14h8l3 6q0 1.500-2 1.500H7q-2 0-2-1.500z" fill="#d92a68"/>',
  Expression: '<text class="serif" x="12" y="11" font-size="13" font-style="italic" text-anchor="middle" fill="#222">f(x)</text><path d="M6 15h12l4 6H2z" fill="#f4669c" stroke="#702"/>',
  Moon: '<path d="M9 1A11 11 0 1 0 22 16Q10 18 9 1z" fill="url(#g-moon)" stroke="#a58fc4" stroke-width=".600"/>',

  Scatter: '<path d="M3 4q4-3 7 1l0 3q-5 1-7-4zM14 3q4-3 6 0-1 4-7 4zM2 12q4-3 8-1l-2 3q-4 1-6-2zM13 9q6-2 8 2-4 3-8 0zM7 13l3 2-4 6-5 1q1-5 6-9zM12 13q4-1 5 2l3 5-3 1q-5-3-5-8z"/>',
  Contours: '<path d="M2 21Q3 5 19 4M7 21Q8 10 20 9M12 21q0-7 8-8" fill="none" stroke="#222" stroke-width="1.300"/>',
  Letter: '<path d="M5 2l16 4-1 4-5-1-2 12-5-1 2-12-5-2z" fill="none" stroke="#222" stroke-width="1.300"/>',
  Roll: '<path d="M3 11L7 3l5-1 8 7v3l-4 8-3-2zM3 11l4 1 10 8 3-8M7 3l0 3 9 7 4-1M7 6l-3 4" fill="none" stroke="#222" stroke-width="1.300"/>',
  Circles: '<g fill="none" stroke="#222" stroke-width="1.400"><circle cx="6" cy="6.500" r="4.200"/><circle cx="17.500" cy="6.500" r="4.200"/><circle cx="6" cy="17.500" r="4.200"/><circle cx="17.500" cy="17.500" r="4.200"/></g>',
  Offset: '<path d="M9 2l10 2 3 8-4 8-9 2-6-5V8z" fill="none" stroke="#222" stroke-width="1.400"/><path d="M8 8h8v8h-4v-4H8zM8 12v4h4" fill="none" stroke="#222" stroke-width="1.300"/>'
};

// Each panel is a list of sections; each section fills its two rows column by column.
const panels = [
  ['Geometry', [
    ['Point', 'Vector'],
    ['Circle', 'Circular Arc', 'Curve', 'Line', 'Plane', 'Rectangle'],
    ['Box', 'Brep', 'Mesh', 'Surface', 'Mesh Face', 'Twisted Box', 'SubD'],
    ['Field', 'Spiral', 'Geometry Cache', 'Transform', 'Geometry Pipeline', 'Group']]],
  ['Primitive', [
    ['Boolean', 'Integer', 'Number', 'Text'],
    ['Colour', 'Domain', 'Culture', 'Domain 1D', 'Matrix', 'Guid', 'Matrix Value', 'Time'],
    ['Shader', 'Data Path', 'File Path', 'Data Sphere']]],
  ['Input', [
    ['Button', 'Scribble'],
    ['Slider', 'Control Knob', 'Digit Scroller', 'Value List', 'Panel', 'MD Slider'],
    ['Gradient', 'Image Sampler', 'Calendar', 'Clock', 'Colour Picker', 'Object Details', 'Colour Wheel', 'Graph Mapper'],
    ['Blue Slider', 'Atom', 'Swatches', 'Import 3DM', 'Import XYZ', 'Import Image', 'Import PDB', 'Import SHP', 'Object ID', 'Atoms']]],
  ['Util', [
    ['Glasses', 'Cherries', 'Tree', 'Galapagos', 'Spelling'],
    ['Loop', 'Record', 'Eraser', 'Jump', 'Timer'],
    ['Arrow Full', 'Arrow Empty', 'Find Out', 'Find In'],
    ['Egg', 'Preset', 'Spiral Data', 'Integer Data', 'Line Data', 'Number Data', 'Point Data', 'Text Data'],
    ['Spheres', 'Flask', 'Expression'],
    ['Moon']]],
  ['OpenNest', [['Scatter', 'Contours'], ['Letter'], ['Roll'], ['Circles', 'Offset']]]
];

const tool = n => `<button class="tool" aria-label="${n}"><svg viewBox="0 0 24 24">${icons[n]}</svg></button>`;
document.getElementById('ribbon').innerHTML = panels.map(([name, sections]) => `
  <div class="panel">
    <div class="panel-body">${sections.map(s => `<div class="tools">${s.map(tool).join('')}</div>`).join('<span class="rule"></span>')}</div>
    <div class="panel-foot"><span>${name}</span><button aria-label="More ${name}"><svg viewBox="0 0 9 9"><path d="M4.500 1v6M1.500 4h6" fill="none" stroke="#999" stroke-width="1.500"/><path d="M2 5h5L4.500 8z" fill="#999"/></svg></button></div>
  </div>`).join('');

// ---- Node graph ---------------------------------------------------------
const TOP = 201; // document row at which the canvas viewport starts

const glyphs = {
  surface: '<path d="M0 9l4.500-8h9L18 9l-4.500 8h-9z" fill="#111"/><path d="M7 5l6-3v12l-9-2z" fill="#bbb" stroke="#fff" stroke-width=".8"/><path d="M10 4v9M6 9l7-1" stroke="#555" stroke-width=".7"/>',
  plane: '<path d="M0 9l4.500-8h9L18 9l-4.500 8h-9z" fill="#111"/><path d="M5 6l8-3 2 7-10 4-1-4z" fill="#ccc" stroke="#fff"/><path d="M7 9l5-2v2l-5 2z" fill="#333"/>',
  populate: '<path d="M2 3l3-1 2 1 2-2 2 2 3-1 2 1-1 3 1 2-2 2 2 2-1 3 0 2-3-1-2 1-2-2-2 1-3 0-1-3 1-2-1-2 2-2-2-2z" fill="#fff"/>',
  division: '<rect x="2" y="2" width="14" height="14" rx="2" fill="#ddd" stroke="#333"/><path d="M13 3L5 15" stroke="#111" stroke-width="1.300"/><text class="sans" x="6" y="9" font-size="7" text-anchor="middle" fill="#111">A</text><text class="sans" x="13" y="15" font-size="7" text-anchor="middle" fill="#111">B</text>',
  reduce: '<path d="M2 2h14v14H2z" fill="#f2f2f2"/><path d="M5.500 2v14M9 2v14M12.500 2v14M2 5.500h14M2 9h14M2 12.500h14" stroke="#555"/><path d="M6 1h3v4H6zM9 9h4v4H9z" fill="#d11"/>',
  center: '<path d="M2 7l7-5 7 3v4l-7 5-7-3z" fill="url(#g-orange)" stroke="#8a4a00" stroke-width=".7"/><path d="M3 7l6-4 6 3-6 3z" fill="#ffdf70"/><rect x="9" y="10" width="7" height="7" fill="#e6e6e6" stroke="#333" stroke-width=".8"/><path d="M11.500 11.500v3h3" fill="none" stroke="#222"/>',
  diff: '<rect x="3" y="3" width="12" height="12" fill="#b6f46c" stroke="#111"/><path d="M6 5l6 8" stroke="#111" stroke-width="2"/>',
  sphere: '<circle cx="9" cy="9" r="6" fill="url(#g-sun)" stroke="#7a3400" stroke-width=".800"/>',
  length: '<path d="M8 2h4v12H8z" fill="#61cc20" stroke="#2b7310" stroke-width=".6"/><path d="M1 14l4-3v2h7v3H5v1z" fill="#d71616"/><path d="M14 11v4h3" fill="none" stroke="#222"/>',
  random: '<path d="M2 9l6-3 8 2v6l-7 3-7-3z" fill="url(#g-orange)" stroke="#6d2e00" stroke-width=".8"/><path d="M2 9l7 2 7-3M9 11v6" fill="none" stroke="#8a4a00"/><path d="M5 1l2 2 2-1 1 1 2-1-1 6-4 1z" fill="#111"/>',
  area: '<text x="8" y="14" font-size="16" font-style="italic" font-weight="bold" text-anchor="middle" fill="#111">m</text><text x="16" y="8" font-size="8" font-style="italic" font-weight="bold" fill="#111" text-anchor="middle">2</text>',
  rotate: '<path d="M2 17l3-5h8l3 5z" fill="url(#g-orange)" stroke="#6d2e00" stroke-width=".7"/><path d="M15 4Q10 0 5 2T5 7l8 0M11 5l3 2-3 2.500" fill="none" stroke="#111" stroke-width="1.700"/>',
  yz: '<path d="M2 3l5 3v7l-5 3z" fill="url(#g-orange)"/>'
};

// comp: [x, y, width, height, inputs, outputs, glyph, style, tag, tag centre, tag top]
const left = [
  [545, 322, 53, 65, 'GNSP', 'P', 'populate', 'dark', 'Populate Geometry', 571, 297],
  [768, 308, 51, 34, 'AB', 'R', 'division', '', 'Division', 793, 284],
  [847, 345, 50, 50, 'LRS', 'L', 'reduce', 'dark', 'Random Reduce', 871, 320],
  [947, 424, 52, 34, 'AB', 'U', 'diff', 'dark', 'Set Difference', 973, 400],
  [1065, 301, 50, 65, 'BXYZ', 'B', 'center', '', 'Center Box', 1089, 276],
  [1065, 432, 50, 34, 'BR', 'S', 'sphere', '', 'Sphere', 1090, 407]
];
const right = [
  [1306, 273, 49, 23, 'L', 'L', 'length', '', 'List Length', 1330, 249],
  [1391, 250, 52, 50, 'RNS', 'R', 'random', '', 'Random', 1417, 226],
  [1388, 331, 53, 35, 'G', 'AC', 'area', '', 'Area', 1414, 307],
  [1543, 315, 65, 51, 'GAP', 'GX', 'rotate', 'wide', 'Rotate', 1576, 291],
  [1560, 414, 40, 19, ' ', ' ', 'plane', 'dark', 'Plane', 1580, 390],
  [1631, 411, 60, 23, 'O', 'P', 'yz', 'dark', 'YZ Plane', 1656, 388]
];
const shift = (list, dx, dy) => list.map(n => [n[0] + dx, n[1] + dy, ...n.slice(2, 9), n[9] + dx, n[10] + dy]);
const comps = [
  [430, 322, 40, 20, ' ', ' ', 'surface', 'hot', 'Surface', 449, 298],
  [444, 680, 39, 19, ' ', ' ', 'surface', 'hot', 'Surface', 463, 656],
  ...left, ...shift(left, 4, 357), ...right, ...shift(right, -5, 349),
  [1647, 251, 49, 23, 'L', 'L', 'length', '', 'List Length', 1671, 227],
  [1633, 604, 49, 23, 'L', 'L', 'length', '', 'List Length', 1665, 580]
];

// slider: [name, x, y, width, label width, handle x, value, round handle]
const sliders = [
  ['Count', 352, 387, 128, 34, 417, '3000'], ['Z', 58, 454, 127, 15, 91, '10'], ['Radius', 58, 532, 131, 37, 112, '12'],
  ['B', 618, 326, 127, 16, 665, '2.5', true], ['Range', 1228, 252, 129, 35, 1285, '180'], ['Range', 1569, 230, 129, 36, 1627, '180'],
  ['Count', 356, 744, 128, 35, 405, '800', true], ['B', 623, 683, 127, 16, 670, '2.5', true],
  ['Range', 1223, 602, 129, 36, 1281, '180'], ['Range', 1564, 580, 129, 36, 1621, '180']
];
const clusters = [[344, 380, 143, 31], [50, 447, 141, 31], [50, 524, 145, 31]];
const notes = [['box', 121, 429], ['sphere', 122, 507], ['Relay', 802, 403], ['Relay', 806, 760]];
const relays = [[787, 427], [791, 784]];

// wire: [x1, y1, x2, y2]
const grey = [
  [473, 332, 542, 331], [486, 690, 546, 688], [482, 395, 542, 347], [482, 395, 765, 317], [487, 752, 546, 704], [487, 752, 769, 674],
  [748, 333, 765, 332], [752, 691, 769, 690], [821, 325, 844, 369], [825, 682, 848, 726],
  ...[326, 341, 357].map(y => [187, 462, 1062, y]),
  ...[683, 698, 714].map(y => [187, 462, 1066, y]),
  ...[1025, 1040, 1055].map(y => [187, 462, 1074, y]),
  [191, 540, 1062, 456], [191, 540, 1066, 813], [191, 540, 1074, 1152],
  [1359, 260, 1388, 260], [1357, 284, 1388, 275], [1354, 609, 1383, 609], [1352, 633, 1383, 624]
];
const hot = [
  [600, 354, 844, 354], [600, 354, 786, 433], [818, 433, 944, 433], [899, 370, 1062, 311], [899, 370, 944, 449], [1001, 441, 1062, 441],
  [604, 711, 848, 711], [604, 711, 790, 790], [822, 790, 948, 790], [903, 727, 1066, 668], [903, 727, 948, 806],
  [1117, 449, 2217, 566], [1121, 806, 2021, 643],
  [1117, 333, 1303, 284], [1117, 333, 1644, 262], [1117, 333, 1540, 325], [1117, 333, 1385, 348],
  [1121, 690, 1298, 633], [1121, 690, 1630, 615], [1121, 690, 1535, 674], [1121, 690, 1380, 697],
  [1445, 275, 1540, 340], [1443, 356, 1540, 356], [1443, 356, 1557, 424], [1602, 424, 1628, 423], [1610, 329, 1700, 329],
  [1440, 624, 1535, 689], [1438, 705, 1535, 705], [1438, 705, 1552, 772], [1597, 773, 1623, 772], [1605, 678, 1700, 678]
];

const wire = (cls, [x1, y1, x2, y2]) => {
  const c = Math.max(Math.abs(x2 - x1), Math.abs(y2 - y1)) / 2;
  return `<path class="wire ${cls}" d="M${x1} ${y1 - TOP}C${x1 + c} ${y1 - TOP} ${x2 - c} ${y2 - TOP} ${x2} ${y2 - TOP}"/>`;
};
const place = (x, y, w, h) => `left:${x}px;top:${y - TOP}px;width:${w}px;height:${h}px`;
const tag = (t, x, y) => `<div class="tag" style="left:${x}px;top:${y - TOP}px">${t}</div>`;

let grid = '';
for (let i = 0; i < 24; i++) {
  const x = Math.floor(38.6 + i * 115.38) + 0.5;
  grid += `<line class="grid-line" x1="${x}" x2="${x}" y1="0" y2="100%"/>`;
}
for (let i = 0; i < 30; i++) {
  const y = Math.floor(232.2 + i * 38.43) - TOP + 0.5;
  grid += `<line class="grid-line" x1="0" x2="100%" y1="${y}" y2="${y}"/>`;
}

const ports = (s, side) => `<ul class="ports ports-${side}">${[...s].map(c => `<li>${c.trim()}</li>`).join('')}</ul>`;

document.getElementById('canvas').innerHTML =
  `<svg class="layer">${grid}</svg>` +
  clusters.map(c => `<div class="cluster" style="${place(...c)}"></div>`).join('') +
  notes.map(n => tag(...n)).join('') +
  comps.map(n => tag(n[8], n[9], n[10])).join('') +
  `<svg class="layer">${grey.map(w => wire('', w)).join('')}${hot.map(w => wire('wire-hot', w)).join('')}` +
  [[1117, 333, 1160, 333], [1121, 690, 1164, 690], [600, 354, 640, 354], [604, 711, 644, 711]].map(w => wire('wire-hot wire-thick', w)).join('') + '</svg>' +
  relays.map(([x, y]) => `<div class="relay" style="${place(x, y, 31, 13)}"></div>`).join('') +
  comps.map(n => `<div class="node node-${n[7]}" style="${place(n[0], n[1], n[2], n[3])}">${ports(n[4], 'in')}${n[7] === 'wide' ? '<span class="expr"></span>' : ''}<svg class="glyph" viewBox="0 0 18 18">${glyphs[n[6]]}</svg>${ports(n[5], 'out')}</div>`).join('') +
  sliders.map(([name, x, y, w, lw, hx, v, round], i) => {
    const start = x + lw + 7;
    const span = w - lw - 13;
    const pos = Math.round((hx - start - 2) / (span - 5) * 1000) / 10;
    return `<div class="slider" style="${place(x, y, w, 16)}"><label for="s${i}" style="width:${lw}px">${name}</label><div class="track"><input id="s${i}" type="range" step="0.1" value="${pos}"${round ? ' class="round"' : ''}><output for="s${i}" style="padding-left:${hx - start + 6}px">${v}</output></div></div>`;
  }).join('');
```
